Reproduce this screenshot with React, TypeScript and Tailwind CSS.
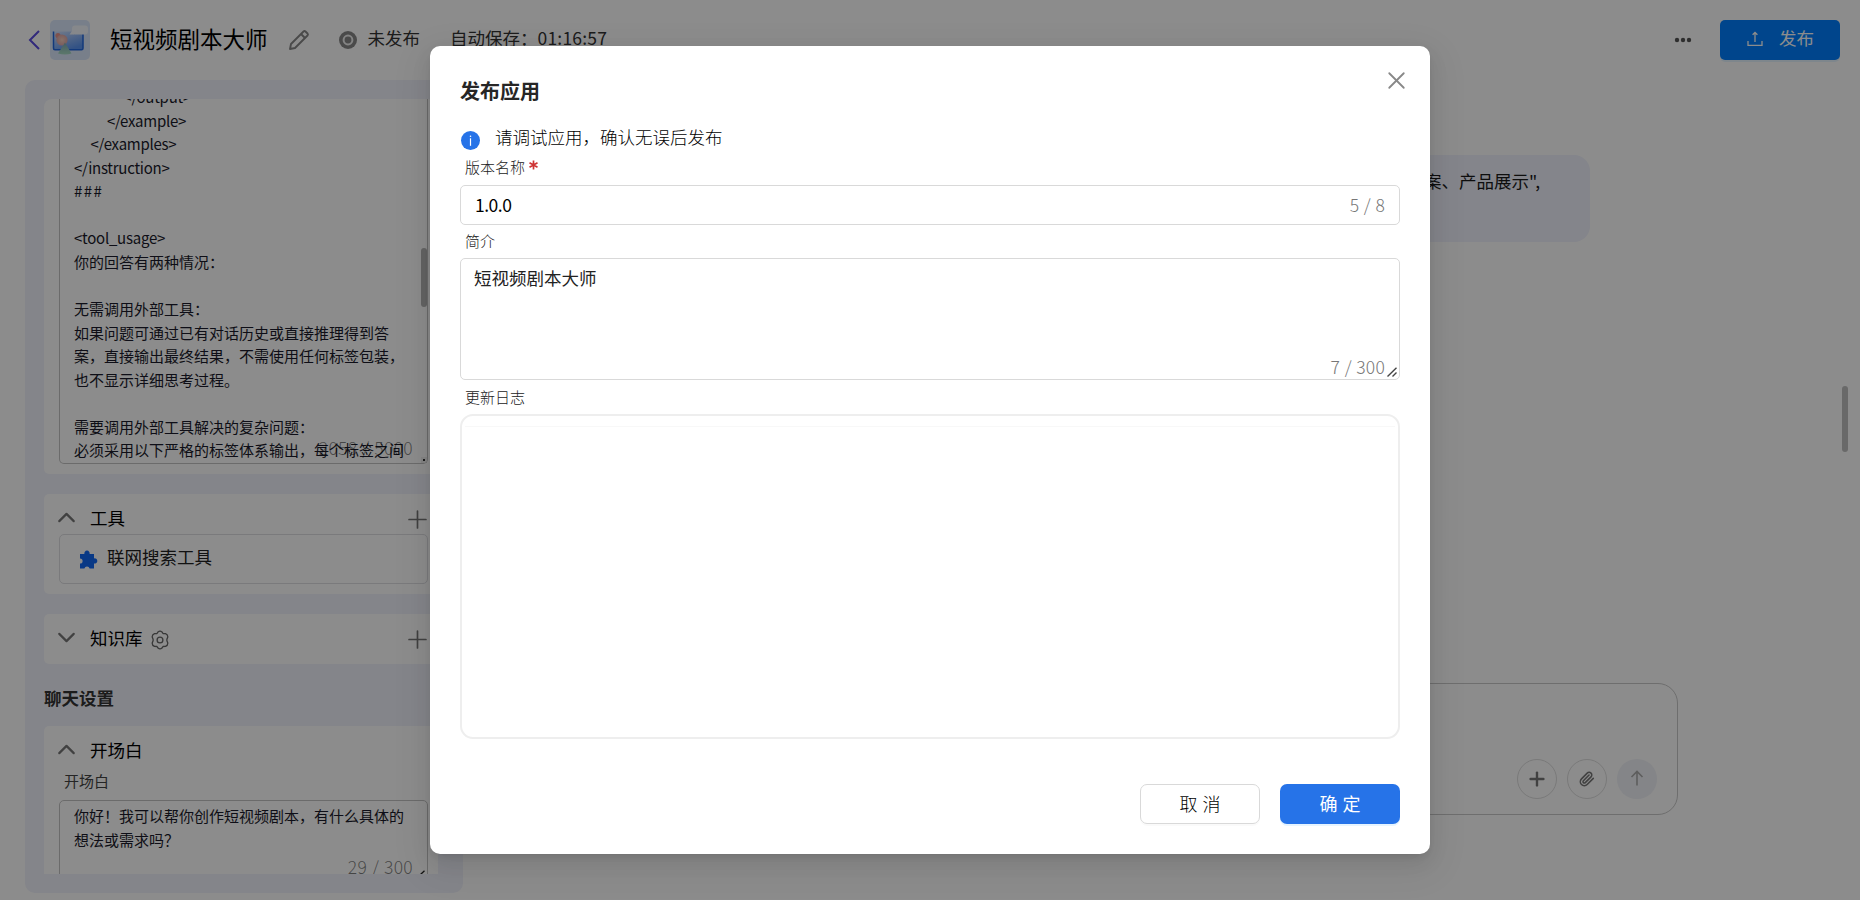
import type { ReactNode } from 'react';
import { LuChevronDown, LuChevronUp, LuPaperclip, LuPlus, LuX } from 'react-icons/lu';

const PROMPT_HEAD = `            </output>
        </example>
    </examples>
</instruction>
`;

const PROMPT_BODY = `
你的回答有两种情况：

无需调用外部工具：
如果问题可通过已有对话历史或直接推理得到答案，直接输出最终结果，不需使用任何标签包装，也不显示详细思考过程。

需要调用外部工具解决的复杂问题：
必须采用以下严格的标签体系输出，每个标签之间`;

function ResizeGrip() {
  return (
    <svg className="absolute right-[2px] bottom-[2px]" width="10" height="10" viewBox="0 0 10 10" stroke="#444" strokeWidth="1.4">
      <path d="M0.5 9.5L9.5 0.8M5.5 9.5L9.5 5.5" />
    </svg>
  );
}

function AppLogo() {
  return (
    <svg width="40" height="40" viewBox="0 0 40 40">
      <defs>
        <linearGradient id="screen" x1="0" y1="0" x2="0.6" y2="1">
          <stop offset="0" stopColor="#d3e2fc" />
          <stop offset="1" stopColor="#5b95f2" />
        </linearGradient>
        <linearGradient id="cone" x1="0" y1="0" x2="0" y2="1">
          <stop offset="0" stopColor="#7fa9b5" />
          <stop offset="1" stopColor="#a8dcc4" />
        </linearGradient>
        <radialGradient id="ball">
          <stop offset="0" stopColor="#f6cfc0" />
          <stop offset="1" stopColor="#dfa9a8" />
        </radialGradient>
      </defs>
      <rect width="40" height="40" rx="5" fill="#dbe8fb" />
      <rect x="3.5" y="11.5" width="29.5" height="18" fill="url(#screen)" />
      <path d="M3.5 11.5V28.3Q3.5 29.8 5 29.8H31.5Q33 29.8 33 28.3V13" fill="none" stroke="#2268e0" strokeWidth="1.5" />
      <rect x="22" y="5.5" width="16" height="9" rx="3" fill="#f4f7fd" />
      <path d="M19.5 14.5L24 8V14.5Z" fill="#f4f7fd" />
      <circle cx="8" cy="15.5" r="2.6" fill="#e8948c" />
      <circle cx="12" cy="20" r="5.6" fill="url(#ball)" />
      <path d="M15 22.5L21.5 33.5Q15 35.5 8 33.5Z" fill="url(#cone)" />
    </svg>
  );
}

function PencilIcon() {
  return (
    <svg width="22" height="22" viewBox="0 0 22 22" fill="none" stroke="#888" strokeWidth="1.9" strokeLinejoin="round">
      <path d="M2 20L3 15L15.5 2.5Q16.5 1.6 17.5 2.5L19.5 4.5Q20.4 5.5 19.5 6.5L7 19Z" />
      <path d="M13 5L17 9" />
    </svg>
  );
}

function PuzzleIcon() {
  return (
    <svg width="19" height="19" viewBox="0 0 19 19" fill="#1269f5">
      <path d="M1 4H5.4A2.7 2.7 0 1 1 10.6 4H15V8.4A2.6 2.6 0 1 1 15 13.4V18.5H10.6A2.7 2.7 0 0 0 5.4 18.5H1V13.6A2.6 2.6 0 0 0 1 8.4Z" />
    </svg>
  );
}

function GearIcon() {
  return (
    <svg width="20" height="20" viewBox="0 0 20 20" fill="none" stroke="#666" strokeWidth="1.3" strokeLinejoin="round">
      <path d="M8 1.9Q10 0.4 12 1.9L13 3.5L15.5 3.6Q17.9 4.6 17.8 7L16.9 9.3V10.7L17.8 13Q17.9 15.4 15.5 16.4L13 16.5L12 18.1Q10 19.6 8 18.1L7 16.5L4.5 16.4Q2.1 15.4 2.2 13L3.1 10.7V9.3L2.2 7Q2.1 4.6 4.5 3.6L7 3.5Z" />
      <circle cx="10" cy="10" r="2.9" />
    </svg>
  );
}

function SectionHeader({ title, open, children, action }: { title: string; open: boolean; children?: ReactNode; action?: boolean }) {
  const Chevron = open ? LuChevronUp : LuChevronDown;

  return (
    <div className="flex h-[30px] items-center text-[17.5px] text-black">
      <Chevron className="mb-[3px] -ml-[7px] size-[29px] text-[#777]" strokeWidth={1.8} />
      <span className="ml-[9px] pb-[2px]">{title}</span>
      {children}
      {action && <LuPlus className="-mr-[9px] ml-auto size-[29px] text-[#777]" strokeWidth={1.4} />}
    </div>
  );
}

function Header() {
  return (
    <header className="flex h-20 shrink-0 items-center pr-5 pl-[28px] text-[17.5px] text-[#333]">
      <svg width="12" height="20" viewBox="0 0 12 20" fill="none" stroke="#5b4be0" strokeWidth="2">
        <path d="M11 1L2 10L11 19" />
      </svg>
      <div className="ml-[10px]">
        <AppLogo />
      </div>
      <h1 className="ml-5 pb-[5px] text-[22.5px] leading-[30px] font-normal text-black">短视频剧本大师</h1>
      <div className="ml-5">
        <PencilIcon />
      </div>
      <svg className="ml-[29px]" width="18" height="18" viewBox="0 0 18 18">
        <circle cx="9" cy="9" r="9" fill="#888" />
        <circle cx="9" cy="9" r="4.4" fill="none" stroke="#eee" strokeWidth="2" />
      </svg>
      <span className="ml-[11px] pb-[3px]">未发布</span>
      <span className="ml-[30px] pb-[3px]">
        自动保存：<span className="tracking-[0.2px]">01:16:57</span>
      </span>
      <svg className="ml-auto" width="18" height="6" viewBox="0 0 18 6" fill="#555">
        <circle cx="3" cy="3" r="2.2" />
        <circle cx="9" cy="3" r="2.2" />
        <circle cx="15" cy="3" r="2.2" />
      </svg>
      <button className="ml-[28px] flex h-10 w-[120px] items-center rounded-[5px] bg-[#007fff] pl-[27px] text-white shadow-[0_2px_0_rgba(5,145,255,0.1)]">
        <svg className="-mt-[3px]" width="16" height="16" viewBox="0 0 16 16" fill="none" stroke="currentColor" strokeWidth="1.3">
          <path d="M1 10V14.3H15V10M8 11V1.5M5.6 3.8L8 1.5L10.4 3.8" />
        </svg>
        <span className="ml-[16px] pb-[3px]">发布</span>
      </button>
    </header>
  );
}

function Sidebar() {
  return (
    <aside className="ml-[25px] h-[813px] w-[438px] rounded-[10px] bg-[#f0f2fb] px-[19px] pt-[19px]">
      <div className="flex h-[775px] w-[394px] flex-col overflow-hidden rounded-tl-[8px]">
        <div className="h-[375px] shrink-0 rounded-b-[5px] bg-white px-[15px]">
          <div className="relative flex h-[365px] w-[369px] flex-col justify-end overflow-hidden rounded-b-[5px] border border-t-0 border-[#c4c4c4] pb-[1px] pl-[14px]">
            <pre className="w-[335px] font-[inherit] text-[15px] leading-[23.57px] whitespace-pre-wrap text-[#1a1a2a]">
              <span className="tracking-[-0.25px] [word-spacing:1px]">{PROMPT_HEAD}</span>
              <span className="tracking-[1.4px]">###</span>
              {'\n\n'}
              <span className="tracking-[-0.25px]">{'<tool_usage>'}</span>
              {PROMPT_BODY}
            </pre>
            <div className="absolute right-[14px] bottom-[2px] text-[17.5px] font-light tracking-[0.3px] text-black/50 [word-spacing:0.7px]">2058 / 5000</div>
            <div className="absolute top-[149px] right-0 h-[59px] w-[6px] rounded-full bg-[#b4b4b4]" />
            <svg className="absolute right-0 bottom-0" width="6" height="6" viewBox="0 0 6 6">
              <rect width="6" height="6" fill="#eee" />
              <rect x="2" y="2" width="2" height="2" fill="#333" />
            </svg>
          </div>
        </div>

        <div className="mt-5 h-[100px] shrink-0 rounded-[5px] bg-white px-[15px] pt-[10px]">
          <SectionHeader title="工具" open action />
          <div className="flex h-[50px] w-[369px] items-center rounded-[5px] border border-[#dedee2] pl-[19px] text-[17.5px] text-[#222]">
            <PuzzleIcon />
            <span className="ml-[9px] pb-[4px]">联网搜索工具</span>
          </div>
        </div>

        <div className="mt-5 h-[50px] shrink-0 rounded-[5px] bg-white px-[15px] pt-[10px]">
          <SectionHeader title="知识库" open={false} action>
            <span className="ml-[7px] pt-[2px]">
              <GearIcon />
            </span>
          </SectionHeader>
        </div>

        <h2 className="mt-[20px] h-[28px] text-[17.5px] leading-[28px] font-bold text-[#333]">聊天设置</h2>

        <div className="mt-[14px] h-[200px] shrink-0 rounded-t-[5px] bg-white px-[15px] pt-[10px]">
          <SectionHeader title="开场白" open />
          <div className="mt-[4px] h-[30px] pl-[5px] text-[15px] leading-[22px] text-[#444]">开场白</div>
          <div className="relative h-[90px] w-[369px] rounded-t-[5px] border border-[#c4c4c4] pt-[3px] pl-[14px] text-[15px] leading-[23.57px] text-[#1a1a2a]">
            <p className="w-[340px]">你好！我可以帮你创作短视频剧本，有什么具体的想法或需求吗？</p>
            <div className="absolute top-[54px] right-[14px] text-[17.5px] font-light tracking-[0.3px] text-black/50 [word-spacing:0.7px]">29 / 300</div>
            <svg className="absolute top-[69px] right-[2px]" width="5" height="5" viewBox="0 0 5 5" stroke="#222" strokeWidth="1.3">
              <path d="M0.5 4.5L4.5 0.8" />
            </svg>
          </div>
        </div>
      </div>
    </aside>
  );
}

function Chat() {
  return (
    <main className="relative flex flex-1 flex-col justify-between pb-[85px]">
      <div className="mt-[75px] mr-[270px] ml-auto flex h-[87px] w-[800px] justify-end rounded-[16px] bg-[#f0f2fd] pt-[13px] pr-[50px] text-[17.5px] leading-[26px] text-[#1a1a1a]">
        案、产品展示",
      </div>
      <div className="mr-[182px] ml-auto flex h-[132px] w-[900px] items-end justify-end gap-[10px] rounded-[20px] border border-[#c8c8c8] pr-[20px] pb-[15px]">
        <span className="flex size-10 items-center justify-center rounded-full border border-[#ddd] text-[#777]">
          <LuPlus className="size-[22px]" strokeWidth={2.6} />
        </span>
        <span className="flex size-10 items-center justify-center rounded-full border border-[#ddd] text-[#777]">
          <LuPaperclip className="size-4" strokeWidth={2.3} />
        </span>
        <span className="flex size-10 items-center justify-center rounded-full bg-[#f0f2f7] text-[#aaa]">
          <svg className="-mt-[2px]" width="14" height="16" viewBox="0 0 14 16" fill="none" stroke="currentColor" strokeWidth="1.6">
            <path d="M7 15.5V1.5M1.5 7L7 1.5L12.5 7" />
          </svg>
        </span>
      </div>
      <div className="absolute top-[306px] right-[12px] h-[66px] w-[6px] rounded-full bg-[#c0c0c0]" />
    </main>
  );
}

function PublishDialog() {
  return (
    <div className="relative flex h-[808px] w-[1000px] flex-col rounded-[10px] bg-white px-[30px] pt-[30px] text-[17.5px] font-light text-black shadow-[0_8px_20px_0_rgba(0,0,0,0.08),0_4px_8px_-4px_rgba(0,0,0,0.12),0_11px_35px_10px_rgba(0,0,0,0.05)]">
      <LuX className="absolute top-[20px] right-[19px] size-[29px] text-[#888]" strokeWidth={1.5} />
      <h2 className="h-[30px] text-[20px] leading-[30px] font-bold text-[#262626]">发布应用</h2>
      <div className="mt-[17px] flex h-[28px] items-start">
        <svg className="mt-[8px] ml-[1px]" width="19" height="19" viewBox="0 0 19 19">
          <circle cx="9.5" cy="9.5" r="9.5" fill="#2673e8" />
          <path d="M9.5 7.3V14.8" stroke="#fff" strokeWidth="1.2" />
          <circle cx="9.5" cy="5.2" r="0.8" fill="#fff" />
        </svg>
        <span className="ml-[15px] leading-[28px]">请调试应用，确认无误后发布</span>
      </div>
      <label className="mt-[5px] flex h-[22px] items-center pl-[5px] text-[15px] leading-[22px] text-[#222]">
        版本名称
        <svg className="-mt-1 ml-1" width="9" height="10" viewBox="0 0 9 10" stroke="#cf3434" strokeWidth="1.7">
          <path d="M4.5 0.5V9.5M0.5 2.7L8.5 7.3M0.5 7.3L8.5 2.7" />
        </svg>
      </label>
      <div className="mt-[7px] flex h-10 items-center justify-between rounded-[5px] border border-[#d9d9d9] px-[14px]">
        <span className="font-normal tracking-[-0.5px]">1.0.0</span>
        <span className="tracking-[0.2px] text-[#777] [word-spacing:0.5px]">5 / 8</span>
      </div>
      <div className="mt-[5px] h-[23px] pl-[5px] text-[15px] leading-[22px] text-[#222]">简介</div>
      <div className="relative mt-[5px] h-[122px] shrink-0 rounded-[5px] border border-[#d9d9d9] px-[13px] pt-[5px] leading-[27.5px]">
        <span className="font-normal text-[#222]">短视频剧本大师</span>
        <span className="absolute right-[14px] bottom-[-1px] tracking-[0.2px] text-[#777] [word-spacing:0.5px]">7 / 300</span>
        <ResizeGrip />
      </div>
      <div className="mt-[6px] h-[22px] pl-[5px] text-[15px] leading-[22px] text-[#222]">更新日志</div>
      <div className="mt-[6px] h-[325px] shrink-0 rounded-[13px] border-2 border-[#eee] px-[3px] pt-[10px]">
        <div className="h-px bg-[#f8f8f8]" />
      </div>
      <div className="mt-[45px] flex justify-end gap-5">
        <button className="h-10 w-[120px] rounded-[7px] border border-[#d9d9d9] pb-[2px] pl-[5px] text-[18px] tracking-[5px] shadow-[0_2px_0_rgba(0,0,0,0.02)]">取消</button>
        <button className="h-10 w-[120px] rounded-[7px] bg-[#2673e8] pb-[2px] pl-[5px] text-[18px] font-normal tracking-[5px] text-white shadow-[0_2px_0_rgba(5,145,255,0.1)]">确定</button>
      </div>
    </div>
  );
}

export default function App() {
  return (
    <div className="relative h-[900px] w-[1860px] overflow-hidden bg-white font-['Noto_Sans_CJK_SC',sans-serif] font-normal">
      <div className="flex h-full flex-col">
        <Header />
        <div className="flex flex-1">
          <Sidebar />
          <Chat />
        </div>
      </div>
      <div className="absolute inset-0 flex items-start justify-center bg-black/45 pt-[46px]">
        <PublishDialog />
      </div>
    </div>
  );
}
